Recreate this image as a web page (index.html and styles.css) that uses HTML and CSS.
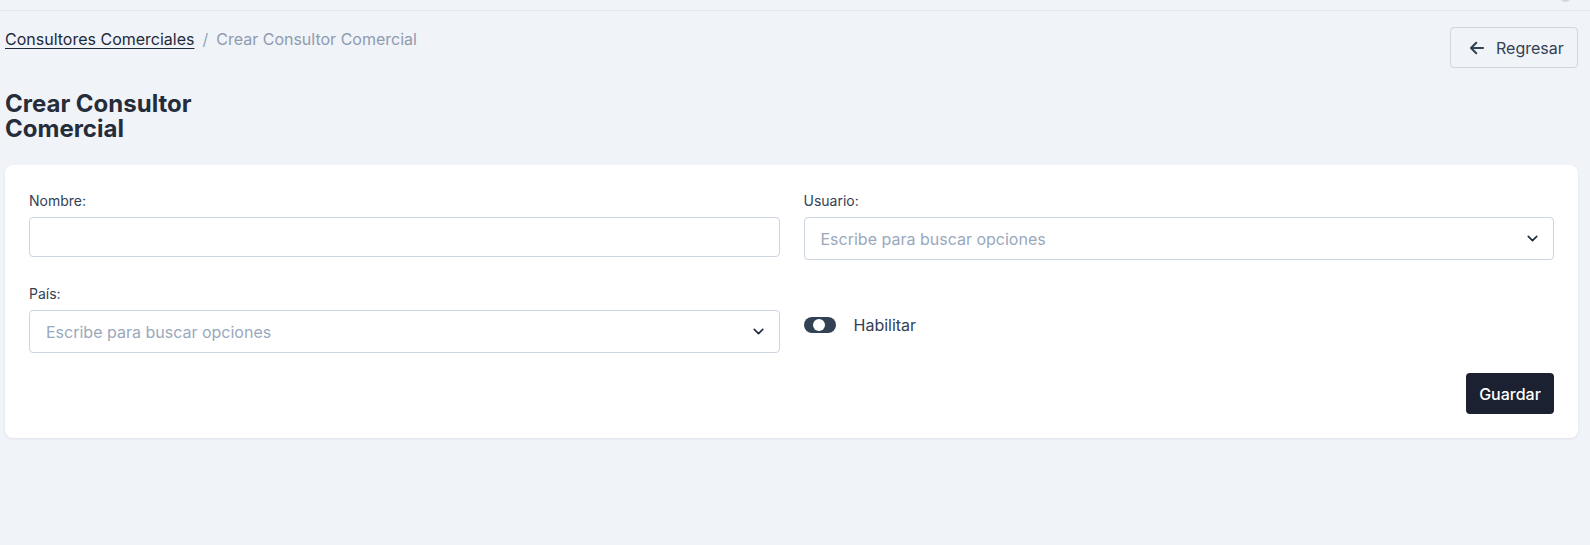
FILE: index.html
```html
<!DOCTYPE html>
<html lang="es">
<head>
<meta charset="utf-8">
<title>Crear Consultor Comercial</title>
<link rel="stylesheet" href="styles.css">
</head>
<body>
<div class="topbar"><span class="avatar"></span></div>
<main class="page">
  <div class="head-row">
    <nav class="breadcrumb">
      <a href="#" class="crumb-link">Consultores Comerciales</a>
      <span class="crumb-sep">/</span>
      <span class="crumb-current">Crear Consultor Comercial</span>
    </nav>
    <button class="btn-back" type="button">
      <svg width="18" height="18" viewBox="0 0 24 24" fill="none" stroke="currentColor" stroke-width="2.8" stroke-linecap="round" stroke-linejoin="round"><path d="M20 12H5"/><path d="M11 5l-7 7 7 7"/></svg>
      <span>Regresar</span>
    </button>
  </div>
  <h1 class="title">Crear Consultor Comercial</h1>
  <section class="card">
    <div class="grid">
      <div class="field">
        <label class="label">Nombre:</label>
        <input class="input" type="text">
      </div>
      <div class="field">
        <label class="label">Usuario:</label>
        <div class="select">
          <span class="placeholder">Escribe para buscar opciones</span>
          <svg width="17" height="17" viewBox="0 0 24 24" fill="none" stroke="#1e293b" stroke-width="2.2" stroke-linecap="round" stroke-linejoin="round"><path d="M6 9l6 6 6-6"/></svg>
        </div>
      </div>
      <div class="field">
        <label class="label">País:</label>
        <div class="select">
          <span class="placeholder">Escribe para buscar opciones</span>
          <svg width="17" height="17" viewBox="0 0 24 24" fill="none" stroke="#1e293b" stroke-width="2.2" stroke-linecap="round" stroke-linejoin="round"><path d="M6 9l6 6 6-6"/></svg>
        </div>
      </div>
      <div class="field toggle-field">
        <div class="toggle-row">
          <span class="toggle"><span class="knob"></span></span>
          <span class="toggle-label">Habilitar</span>
        </div>
      </div>
    </div>
    <div class="actions">
      <button class="btn-save" type="button">Guardar</button>
    </div>
  </section>
</main>
</body>
</html>
```

FILE: styles.css
```css
* { box-sizing: border-box; }
html, body { margin: 0; padding: 0; }
body {
  background: #f0f3f8;
  font-family: Inter, "Noto Sans", sans-serif;
  color: #1e293b;
  height: 545px;
  overflow: hidden;
}
.topbar {
  height: 11px;
  border-bottom: 1px solid #e1e6ee;
  position: relative;
}
.avatar {
  position: absolute;
  right: 18px;
  top: -11px;
  width: 13px;
  height: 13px;
  border-radius: 50%;
  background: #d3d8e0;
}
.page {
  padding: 16px 12px 0 5px;
}
.head-row {
  display: flex;
  justify-content: space-between;
  align-items: flex-start;
}
.breadcrumb {
  display: flex;
  align-items: center;
  gap: 8px;
  font-size: 16px;
  line-height: 24px;
}
.crumb-link {
  color: #1e293b;
  text-decoration: underline;
  text-underline-offset: 3px;
}
.crumb-sep { color: #94a3b8; }
.crumb-current { color: #8f9bb0; }
.btn-back {
  display: flex;
  align-items: center;
  gap: 10px;
  width: 128px;
  height: 41px;
  padding: 0 0 0 17px;
  background: transparent;
  border: 1px solid #cfd6e2;
  border-radius: 4px;
  font-family: inherit;
  font-size: 16px;
  color: #334155;
}
.btn-back svg { color: #334155; }
.title {
  margin: 23px 0 24px;
  max-width: 210px;
  font-size: 24px;
  line-height: 25px;
  font-weight: 700;
  color: #252d3a;
}
.card {
  background: #fff;
  border-radius: 8px;
  box-shadow: 0 1px 3px rgba(15, 23, 42, 0.08);
  padding: 26px 24px 24px;
}
.grid {
  display: grid;
  grid-template-columns: 1fr 1fr;
  column-gap: 24px;
  row-gap: 24px;
  align-items: start;
}
.field {
  display: flex;
  flex-direction: column;
}
.label {
  font-size: 14px;
  line-height: 20px;
  color: #334155;
  margin-bottom: 6px;
}
.input {
  height: 40px;
  border: 1px solid #ccd4e0;
  border-radius: 4px;
  background: #fff;
  font-family: inherit;
  font-size: 16px;
}
.select {
  height: 43px;
  border: 1px solid #ccd4e0;
  border-radius: 4px;
  display: flex;
  align-items: center;
  justify-content: space-between;
  padding: 0 12px 0 16px;
}
.placeholder {
  font-size: 16px;
  color: #9aa8bd;
}
.toggle-field {
  padding-top: 30px;
}
.toggle-row {
  display: flex;
  align-items: center;
  gap: 18px;
  height: 22px;
}
.toggle {
  position: relative;
  width: 32px;
  height: 16px;
  border-radius: 8px;
  background: #334155;
}
.knob {
  position: absolute;
  left: 9px;
  top: 2px;
  width: 12px;
  height: 12px;
  border-radius: 50%;
  background: #fff;
}
.toggle-label {
  font-size: 16px;
  color: #334155;
}
.actions {
  display: flex;
  justify-content: flex-end;
  margin-top: 20px;
}
.btn-save {
  width: 88px;
  height: 41px;
  border: 0;
  border-radius: 4px;
  background: #1b2130;
  color: #fff;
  font-family: inherit;
  font-size: 16px;
  font-weight: 500;
}
```
